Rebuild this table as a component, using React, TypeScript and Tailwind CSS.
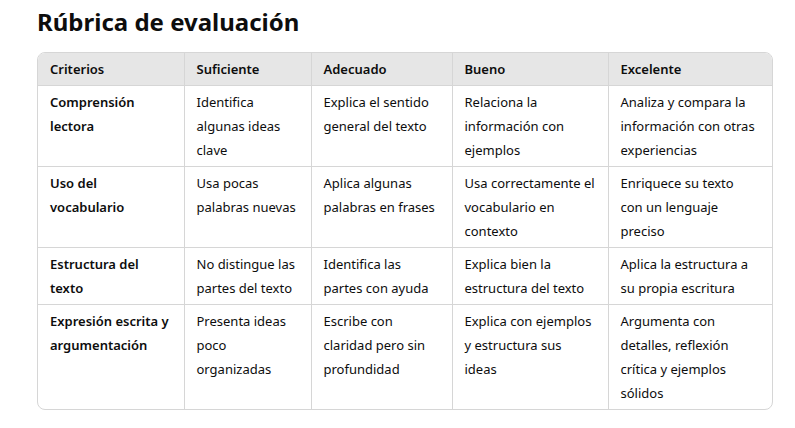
const headers = ["Criterios", "Suficiente", "Adecuado", "Bueno", "Excelente"];

const rows = [
  [
    "Comprensión lectora",
    "Identifica algunas ideas clave",
    "Explica el sentido general del texto",
    "Relaciona la información con ejemplos",
    "Analiza y compara la información con otras experiencias",
  ],
  [
    "Uso del vocabulario",
    "Usa pocas palabras nuevas",
    "Aplica algunas palabras en frases",
    "Usa correctamente el vocabulario en contexto",
    "Enriquece su texto con un lenguaje preciso",
  ],
  [
    "Estructura del texto",
    "No distingue las partes del texto",
    "Identifica las partes con ayuda",
    "Explica bien la estructura del texto",
    "Aplica la estructura a su propia escritura",
  ],
  [
    "Expresión escrita y argumentación",
    "Presenta ideas poco organizadas",
    "Escribe con claridad pero sin profundidad",
    "Explica con ejemplos y estructura sus ideas",
    "Argumenta con detalles, reflexión crítica y ejemplos sólidos",
  ],
];

const widths = ["w-[146px]", "w-[127px]", "w-[141px]", "w-[156px]", "w-[164px]"];

export default function App() {
  return (
    <div className="min-h-[428px] bg-white pl-[37px] pt-[6px] text-[#0d0d0d] font-['Noto_Sans',sans-serif]">
      <h1 className="text-[24px] leading-[32px] font-bold">Rúbrica de evaluación</h1>
      <div className="mt-[14px] w-[736px] rounded-lg border border-[#d6d6d6] overflow-hidden">
        <table className="w-full table-fixed border-collapse text-[13px] leading-[24px]">
          <thead>
            <tr className="bg-[#e6e6e6]">
              {headers.map((h, i) => (
                <th
                  key={h}
                  className={`${widths[i]} pl-3 ${i === 4 ? "pr-[14px]" : "pr-3"} py-1 text-left font-semibold border-b border-[#d6d6d6] ${i > 0 ? "border-l" : ""}`}
                >
                  {h}
                </th>
              ))}
            </tr>
          </thead>
          <tbody>
            {rows.map((row, r) => (
              <tr key={r}>
                {row.map((cell, i) => (
                  <td
                    key={i}
                    className={`pl-3 ${i === 4 ? "pr-[14px]" : "pr-3"} py-1 align-top border-[#d6d6d6] ${i > 0 ? "border-l" : ""} ${r < rows.length - 1 ? "border-b" : ""} ${i === 0 ? "font-semibold" : ""}`}
                  >
                    {cell}
                  </td>
                ))}
              </tr>
            ))}
          </tbody>
        </table>
      </div>
    </div>
  );
}
